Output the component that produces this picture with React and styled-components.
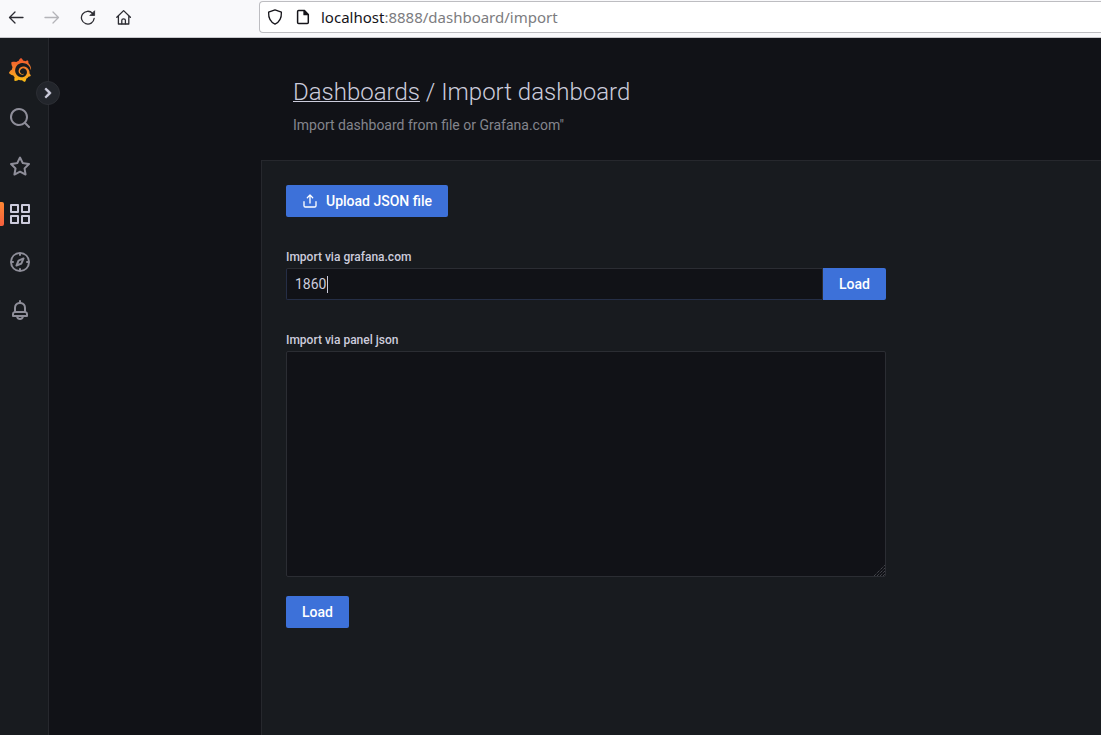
import React from "react";
import styled, { createGlobalStyle } from "styled-components";
import { SiGrafana } from "react-icons/si";

const GlobalStyle = createGlobalStyle`
  *, *::before, *::after { box-sizing: border-box; }
  body {
    margin: 0;
    background: #111217;
    color: #ccccdc;
    font-family: Roboto, "Liberation Sans", sans-serif;
    font-size: 14px;
    line-height: 22px;
  }
  button, input, textarea { font: inherit; color: inherit; }
`;

const Page = styled.div`
  display: flex;
  flex-direction: column;
  min-height: 100vh;
  overflow: hidden;
`;

const BrowserBar = styled.header`
  display: flex;
  align-items: center;
  height: 38px;
  padding-bottom: 3px;
  background: #f9f9fb;
  border-bottom: 1px solid #c8c8cc;
`;

const BrowserNav = styled.nav`
  display: flex;
  gap: 12px;
  width: 259px;
  padding-left: 4px;
`;

const BrowserButton = styled.button`
  display: grid;
  place-items: center;
  width: 24px;
  height: 24px;
  padding: 0;
  border: 0;
  background: none;
  color: ${(p) => (p.disabled ? "#b4b4b8" : "#2c2c32")};
`;

const AddressBar = styled.div`
  flex: 1;
  display: flex;
  align-items: center;
  gap: 12px;
  height: 32px;
  padding-left: 7px;
  background: #fff;
  border: 1px solid #bdbdc1;
  border-right: 0;
  border-radius: 4px 0 0 4px;
  color: #15141a;
`;

const Url = styled.span`
  margin-left: -2px;
  font-family: "Noto Sans", "Open Sans", sans-serif;
  font-size: 15px;
  color: #7c7c80;
`;

const Host = styled.span`
  color: #15141a;
`;

const Shell = styled.div`
  flex: 1;
  display: flex;
`;

const Sidebar = styled.nav`
  position: relative;
  flex: none;
  display: flex;
  flex-direction: column;
  width: 49px;
  padding-top: 8px;
  background: #181b1f;
  border-right: 1px solid #26282d;
`;

const SideLink = styled.a`
  position: relative;
  display: flex;
  align-items: center;
  height: 48px;
  padding-left: 8px;
  color: ${(p) => (p.$active ? "#ccccdc" : "#8e8e99")};

  &::before {
    content: "";
    display: ${(p) => (p.$active ? "block" : "none")};
    position: absolute;
    left: 0;
    top: 12px;
    width: 4px;
    height: 24px;
    border-radius: 0 2px 2px 0;
    background: linear-gradient(#ff8833, #f55f3e);
  }
`;

const Logo = styled(SiGrafana)`
  width: 24px;
  height: 24px;
  fill: url(#logo-gradient);
`;

const ExpandButton = styled.button`
  position: absolute;
  top: 43px;
  right: -12px;
  display: grid;
  place-items: center;
  width: 24px;
  height: 24px;
  padding: 0;
  border: 1px solid #2c2e34;
  border-radius: 50%;
  background: #22252b;
  color: #ccccdc;

  path {
    stroke: currentColor;
  }
`;

const Main = styled.main`
  flex: 1;
  display: flex;
  flex-direction: column;
  min-width: 0;
  padding-left: 212px;
`;

const PageHeader = styled.div`
  padding: 40px 32px 24px;
`;

const Title = styled.h1`
  margin: 0 0 8px;
  font-size: 24px;
  line-height: 28px;
  font-weight: 350;
`;

const TitleLink = styled.a`
  color: inherit;
  text-decoration: underline;
  text-decoration-thickness: 1px;
`;

const Subtitle = styled.p`
  margin: 0;
  color: #84858d;
`;

const Panel = styled.section`
  flex: 1;
  padding: 24px;
  background: #181b1f;
  border: solid #26282d;
  border-width: 1px 0 0 1px;
`;

const Form = styled.form`
  display: flex;
  flex-direction: column;
  align-items: flex-start;
  max-width: 600px;
`;

const Button = styled.button`
  display: flex;
  align-items: center;
  justify-content: center;
  gap: 8px;
  height: 32px;
  padding: 0 16px;
  border: 0;
  border-radius: ${(p) => (p.$joined ? "0 2px 2px 0" : "2px")};
  background: #3d71d9;
  color: #fff;
  font-weight: 500;
`;

const Field = styled.div`
  width: 100%;
  margin-top: 32px;
`;

const Label = styled.label`
  display: block;
  margin-bottom: 3px;
  font-size: 12px;
  line-height: 16px;
  font-weight: 500;
`;

const InputRow = styled.div`
  display: flex;
`;

const InputWrap = styled.div`
  position: relative;
  flex: 1;
`;

const Input = styled.input`
  display: block;
  width: 100%;
  height: 32px;
  padding: 0 8px;
  border: 1px solid #2b2d33;
  border-left-color: #252e46;
  border-bottom-color: #252e46;
  border-radius: 2px 0 0 2px;
  background: #111217;
  outline: none;
`;

const Caret = styled.span`
  position: absolute;
  left: 41px;
  top: 8px;
  width: 1px;
  height: 17px;
  background: #ccccdc;
`;

const AreaWrap = styled.div`
  position: relative;
  margin-bottom: 19px;
`;

const TextArea = styled.textarea`
  display: block;
  width: 100%;
  height: 226px;
  padding: 4px 8px;
  border: 1px solid #2b2d33;
  border-radius: 2px;
  background: #111217;
  outline: none;
  resize: none;
`;

const Grip = styled.svg`
  position: absolute;
  right: 1px;
  bottom: 1px;
`;

const glyphs = {
  search:
    "M21.71,20.29,18,16.61A9,9,0,1,0,16.61,18l3.68,3.68a1,1,0,0,0,1.42,0A1,1,0,0,0,21.71,20.29ZM11,18a7,7,0,1,1,7-7A7,7,0,0,1,11,18Z",
  star: "M22,9.67A1,1,0,0,0,21.14,9l-5.69-.83L12.9,3a1,1,0,0,0-1.8,0L8.55,8.16,2.86,9a1,1,0,0,0-.81.68,1,1,0,0,0,.25,1l4.13,4-1,5.68A1,1,0,0,0,6.9,21.44L12,18.77l5.1,2.67a.93.93,0,0,0,.46.12,1,1,0,0,0,.59-.19,1,1,0,0,0,.4-1l-1-5.68,4.13-4A1,1,0,0,0,22,9.67Zm-6.15,4a1,1,0,0,0-.29.88l.72,4.2-3.76-2a1.06,1.06,0,0,0-.94,0l-3.76,2,.72-4.2a1,1,0,0,0-.29-.88l-3-3,4.21-.61a1,1,0,0,0,.76-.55L12,5.7l1.88,3.82a1,1,0,0,0,.76.55l4.21.61Z",
  apps: "M10,13H3a1,1,0,0,0-1,1v7a1,1,0,0,0,1,1h7a1,1,0,0,0,1-1V14A1,1,0,0,0,10,13ZM9,20H4V15H9ZM21,2H14a1,1,0,0,0-1,1v7a1,1,0,0,0,1,1h7a1,1,0,0,0,1-1V3A1,1,0,0,0,21,2ZM20,9H15V4h5Zm1,4H14a1,1,0,0,0-1,1v7a1,1,0,0,0,1,1h7a1,1,0,0,0,1-1V14A1,1,0,0,0,21,13Zm-1,7H15V15h5ZM10,2H3A1,1,0,0,0,2,3v7a1,1,0,0,0,1,1h7a1,1,0,0,0,1-1V3A1,1,0,0,0,10,2ZM9,9H4V4H9Z",
  compass:
    "M12,2A10,10,0,1,0,22,12,10,10,0,0,0,12,2Zm1,17.93V19a1,1,0,0,0-2,0v.93A8,8,0,0,1,4.07,13H5a1,1,0,0,0,0-2H4.07A8,8,0,0,1,11,4.07V5a1,1,0,0,0,2,0V4.07A8,8,0,0,1,19.93,11H19a1,1,0,0,0,0,2h.93A8,8,0,0,1,13,19.93ZM15.14,7.55l-5,2.12a1,1,0,0,0-.52.52l-2.12,5a1,1,0,0,0,.21,1.1,1,1,0,0,0,.7.29.93.93,0,0,0,.4-.08l5-2.12a1,1,0,0,0,.52-.52l2.12-5a1,1,0,0,0-1.31-1.31Zm-2.49,5.1-2.28,1,1-2.28,2.28-1Z",
  bell: "M18,13.18V10a6,6,0,0,0-5-5.91V3a1,1,0,0,0-2,0V4.09A6,6,0,0,0,6,10v3.18A3,3,0,0,0,4,16v2a1,1,0,0,0,1,1H8.14a4,4,0,0,0,7.72,0H19a1,1,0,0,0,1-1V16A3,3,0,0,0,18,13.18ZM8,10a4,4,0,0,1,8,0v3H8Zm4,10a2,2,0,0,1-1.72-1h3.44A2,2,0,0,1,12,20Zm6-3H6V16a1,1,0,0,1,1-1H17a1,1,0,0,1,1,1Z",
  upload:
    "M8.71,7.71,11,5.41V15a1,1,0,0,0,2,0V5.41l2.29,2.3a1,1,0,0,0,1.42,0,1,1,0,0,0,0-1.42l-4-4a1,1,0,0,0-.33-.21,1,1,0,0,0-.76,0,1,1,0,0,0-.33.21l-4,4A1,1,0,1,0,8.71,7.71ZM21,12a1,1,0,0,0-1,1v6a1,1,0,0,1-1,1H5a1,1,0,0,1-1-1V13a1,1,0,0,0-2,0v6a3,3,0,0,0,3,3H19a3,3,0,0,0,3-3V13A1,1,0,0,0,21,12Z",
  angleRight:
    "M14.83,11.29,10.59,7.05a1,1,0,0,0-1.42,0,1,1,0,0,0,0,1.41L12.71,12,9.17,15.54a1,1,0,0,0,0,1.41,1,1,0,0,0,.71.29,1,1,0,0,0,.71-.29l4.24-4.24A1,1,0,0,0,14.83,11.29Z",
};

const Glyph = ({ name, size = 24 }) => (
  <svg width={size} height={size} viewBox="0 0 24 24" fill="currentColor" aria-hidden="true">
    <path d={glyphs[name]} />
  </svg>
);

const LineIcon = ({ children }) => (
  <svg
    width="16"
    height="16"
    viewBox="0 0 16 16"
    fill="none"
    stroke="currentColor"
    strokeWidth="1.3"
    strokeLinecap="round"
    strokeLinejoin="round"
    aria-hidden="true"
  >
    {children}
  </svg>
);

const sideItems = [
  { name: "search", label: "Search" },
  { name: "star", label: "Starred" },
  { name: "apps", label: "Dashboards", active: true },
  { name: "compass", label: "Explore" },
  { name: "bell", label: "Alerting" },
];

export default function App() {
  return (
    <Page>
      <GlobalStyle />
      <BrowserBar>
        <BrowserNav aria-label="Browser">
          <BrowserButton aria-label="Back">
            <LineIcon>
              <path d="M15 8.5H1.5M7 3L1.5 8.5L7 14" />
            </LineIcon>
          </BrowserButton>
          <BrowserButton aria-label="Forward" disabled>
            <LineIcon>
              <path d="M1 8.5H14.5M9 3L14.5 8.5L9 14" />
            </LineIcon>
          </BrowserButton>
          <BrowserButton aria-label="Reload">
            <LineIcon>
              <path d="M14.2 9.3A6.4 6.4 0 1 1 12.6 4.4" />
              <path d="M14.6 2.1V6.5H10.2Z" fill="currentColor" strokeWidth="0.8" />
            </LineIcon>
          </BrowserButton>
          <BrowserButton aria-label="Home">
            <LineIcon>
              <path d="M0.8 8.3L7.6 1.6L14.4 8.3M2.4 7V15H12.8V7" />
              <path d="M5.8 14.8V11.2Q5.8 9.8 7.6 9.8Q9.4 9.8 9.4 11.2V14.8" />
            </LineIcon>
          </BrowserButton>
        </BrowserNav>
        <AddressBar>
          <LineIcon>
            <path d="M8 0.9L14.4 3.2C14.6 8.6 12.6 13 8 15.1C3.4 13 1.4 8.6 1.6 3.2Z" />
          </LineIcon>
          <LineIcon>
            <path
              d="M3.6 1.4H9.2L13.3 5.5V13.6Q13.3 14.6 12.3 14.6H3.6Q2.6 14.6 2.6 13.6V2.4Q2.6 1.4 3.6 1.4Z"
              strokeWidth="1.5"
            />
            <path d="M9 1.6V5.7H13.1Z" fill="currentColor" />
          </LineIcon>
          <Url>
            <Host>localhost</Host>:8888/dashboard/import
          </Url>
        </AddressBar>
      </BrowserBar>

      <Shell>
        <Sidebar aria-label="Main">
          <SideLink href="#home" aria-label="Home">
            <svg width="0" height="0" aria-hidden="true">
              <defs>
                <linearGradient id="logo-gradient" x1="0" y1="0" x2="0" y2="1">
                  <stop offset="0" stopColor="#f0552c" />
                  <stop offset="0.5" stopColor="#f5852a" />
                  <stop offset="1" stopColor="#fbc012" />
                </linearGradient>
              </defs>
            </svg>
            <Logo />
          </SideLink>
          {sideItems.map((item) => (
            <SideLink key={item.name} href={`#${item.name}`} aria-label={item.label} $active={item.active}>
              <Glyph name={item.name} />
            </SideLink>
          ))}
          <ExpandButton aria-label="Expand menu">
            <Glyph name="angleRight" size={22} />
          </ExpandButton>
        </Sidebar>

        <Main>
          <PageHeader>
            <Title>
              <TitleLink href="#dashboards">Dashboards</TitleLink> / Import dashboard
            </Title>
            <Subtitle>Import dashboard from file or Grafana.com"</Subtitle>
          </PageHeader>
          <Panel>
            <Form onSubmit={(e) => e.preventDefault()}>
              <Button type="button">
                <Glyph name="upload" size={16} />
                Upload JSON file
              </Button>
              <Field>
                <Label htmlFor="gcom">Import via grafana.com</Label>
                <InputRow>
                  <InputWrap>
                    <Input id="gcom" defaultValue="1860" />
                    <Caret />
                  </InputWrap>
                  <Button type="submit" $joined>
                    Load
                  </Button>
                </InputRow>
              </Field>
              <Field>
                <Label htmlFor="json">Import via panel json</Label>
                <AreaWrap>
                  <TextArea id="json" />
                  <Grip width="11" height="11" viewBox="0 0 11 11" stroke="#5a5c62" strokeDasharray="1 1" aria-hidden="true">
                    <path d="M0 11L11 0M3 11L11 3M6 11L11 6M9 11L11 9" />
                  </Grip>
                </AreaWrap>
              </Field>
              <Button type="submit">Load</Button>
            </Form>
          </Panel>
        </Main>
      </Shell>
    </Page>
  );
}
